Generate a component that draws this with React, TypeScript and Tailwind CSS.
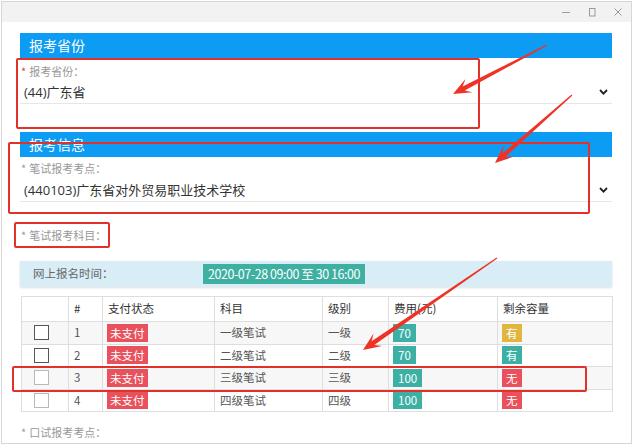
import React from "react";

type Pt = [number, number];

function arrowPoints(tail: Pt, tip: Pt): string {
  const [tx, ty] = tail;
  const [hx, hy] = tip;
  const dx = hx - tx;
  const dy = hy - ty;
  const L = Math.hypot(dx, dy);
  const ux = dx / L;
  const uy = dy / L;
  const px = -uy;
  const py = ux;
  const headLen = 17;
  const headW = 7.5;
  const neckW = 2.3;
  const tailW = 0.6;
  const neckX = hx - ux * (headLen - 5);
  const neckY = hy - uy * (headLen - 5);
  const barbX = hx - ux * (headLen + 1);
  const barbY = hy - uy * (headLen + 1);
  const pts: Pt[] = [
    [tx + px * tailW, ty + py * tailW],
    [neckX + px * neckW, neckY + py * neckW],
    [barbX + px * headW, barbY + py * headW],
    [hx, hy],
    [barbX - px * headW, barbY - py * headW],
    [neckX - px * neckW, neckY - py * neckW],
    [tx - px * tailW, ty - py * tailW],
  ];
  return pts.map(([x, y]) => `${x.toFixed(1)},${y.toFixed(1)}`).join(" ");
}

const arrows: [Pt, Pt][] = [
  [[547, 45], [453, 94]],
  [[572, 95], [495, 163]],
  [[497, 258], [363, 350]],
];

const CJK = { fontFamily: '"Noto Sans CJK SC", "Noto Sans", sans-serif' };
const VAL = { fontFamily: '"Open Sans", "Noto Sans CJK SC", sans-serif' };

function Chevron() {
  return (
    <svg width="9" height="6" viewBox="0 0 9 6" className="shrink-0">
      <path d="M1 1 L4.5 4.6 L8 1" fill="none" stroke="#222" strokeWidth="1.8" />
    </svg>
  );
}

function Label({ text, redStar }: { text: string; redStar?: boolean }) {
  return (
    <div className="flex items-center h-[14px] text-[11px] leading-[14px] text-[#999]">
      <span className={redStar ? "text-[#e8403a] ml-[1px]" : "text-[#999] ml-[1px]"}>*</span>
      <span className="ml-[3px]">{text}</span>
    </div>
  );
}

function SelectRow({ value }: { value: string }) {
  return (
    <div className="flex items-center justify-between h-[23px] border-b border-[#e6e6e6] pl-[4px] pr-[4px]">
      <span className="text-[13px] leading-[22px] text-[#333]" style={VAL}>
        {value}
      </span>
      <Chevron />
    </div>
  );
}

function Header({ text }: { text: string }) {
  return (
    <div className="h-[25px] bg-[#0d9cf3] pl-[9px] text-[14px] leading-[25px] text-white">
      {text}
    </div>
  );
}

type Row = {
  n: number;
  subject: string;
  level: string;
  fee: string;
  cap: string;
  capColor: string;
  dark: boolean;
  stripe: boolean;
};

const rows: Row[] = [
  { n: 1, subject: "一级笔试", level: "一级", fee: "70", cap: "有", capColor: "bg-[#e0b640]", dark: true, stripe: true },
  { n: 2, subject: "二级笔试", level: "二级", fee: "70", cap: "有", capColor: "bg-[#3cb0a5]", dark: true, stripe: false },
  { n: 3, subject: "三级笔试", level: "三级", fee: "100", cap: "无", capColor: "bg-[#e9525d]", dark: false, stripe: true },
  { n: 4, subject: "四级笔试", level: "四级", fee: "100", cap: "无", capColor: "bg-[#e9525d]", dark: false, stripe: false },
];

const cell = "border border-[#dedede] px-[5px] align-middle";

export default function App() {
  return (
    <div className="relative w-[634px] h-[446px] bg-white overflow-hidden" style={CJK}>
      <div className="ml-[1px] mt-[1px] w-[631px] h-[443px] border border-[#d6d6d6] flex flex-col bg-white">
        {/* title bar */}
        <div className="h-[20px] bg-[#f2f2f2] flex justify-end items-center shrink-0">
          <div className="w-[26px] flex justify-center">
            <svg width="8" height="8" viewBox="0 0 8 8">
              <path d="M0 4.5 H8" stroke="#9a9a9a" strokeWidth="1" />
            </svg>
          </div>
          <div className="w-[26px] flex justify-center">
            <svg width="8" height="9" viewBox="0 0 8 9">
              <rect x="1.5" y="0.5" width="5.5" height="7.5" fill="none" stroke="#9a9a9a" strokeWidth="1" />
            </svg>
          </div>
          <div className="w-[26px] flex justify-center">
            <svg width="8" height="8" viewBox="0 0 8 8">
              <path d="M0.5 0.5 L7.5 7.5 M7.5 0.5 L0.5 7.5" stroke="#9a9a9a" strokeWidth="1" />
            </svg>
          </div>
        </div>

        {/* content */}
        <div className="pl-[18px] pr-[19px] flex flex-col">
          <div className="mt-[11px]">
            <Header text="报考省份" />
          </div>
          <div className="mt-[6px]">
            <Label text="报考省份：" redStar />
          </div>
          <div className="mt-[3px]">
            <SelectRow value="(44)广东省" />
          </div>

          <div className="mt-[28px]">
            <Header text="报考信息" />
          </div>
          <div className="mt-[4px]">
            <Label text="笔试报考考点：" />
          </div>
          <div className="mt-[4px]">
            <SelectRow value="(440103)广东省对外贸易职业技术学校" />
          </div>

          <div className="mt-[26px]">
            <Label text="笔试报考科目：" />
          </div>

          <div className="mt-[19px] h-[26px] bg-[#d9edf7] flex items-center shadow-[0_1px_2px_rgba(0,0,0,0.12)]">
            <span className="pl-[13px] w-[183px] text-[11.5px] text-[#666]">网上报名时间：</span>
            <span className="h-[20px] px-[5px] bg-[#3eb0a2] text-white text-[12.5px] leading-[20px] tracking-[-0.45px]">
              2020-07-28 09:00 至 30 16:00
            </span>
          </div>

          <table className="mt-[9px] ml-[1px] border-collapse table-fixed w-[591px] text-[11.5px]">
            <colgroup>
              <col className="w-[47px]" />
              <col className="w-[34px]" />
              <col className="w-[112px]" />
              <col className="w-[108px]" />
              <col className="w-[66px]" />
              <col className="w-[109px]" />
              <col className="w-[115px]" />
            </colgroup>
            <thead>
              <tr className="h-[25px] text-[#333] text-left">
                <th className={cell + " font-normal"}></th>
                <th className={cell + " font-normal"}>#</th>
                <th className={cell + " font-normal"}>支付状态</th>
                <th className={cell + " font-normal"}>科目</th>
                <th className={cell + " font-normal"}>级别</th>
                <th className={cell + " font-normal"}>费用(元)</th>
                <th className={cell + " font-normal"}>剩余容量</th>
              </tr>
            </thead>
            <tbody>
              {rows.map((r) => (
                <tr
                  key={r.n}
                  className={(r.stripe ? "bg-[#f7f7f7] " : "bg-white ") + "h-[22.5px] text-[#555]"}
                >
                  <td className="border border-[#dedede] pl-[12px] align-middle">
                    <div
                      className={
                        r.dark
                          ? "w-[15px] h-[15px] border-[1.5px] border-[#555] bg-white"
                          : "w-[15px] h-[15px] border-[1.5px] border-[#b8b8b8] bg-white"
                      }
                    />
                  </td>
                  <td className={cell}>{r.n}</td>
                  <td className={cell + " !px-[4px]"}>
                    <span className="inline-block h-[18px] leading-[18px] px-[3px] bg-[#e9525d] text-white">
                      未支付
                    </span>
                  </td>
                  <td className={cell}>{r.subject}</td>
                  <td className={cell}>{r.level}</td>
                  <td className={cell + " !px-[4px]"}>
                    <span className="inline-block h-[18px] leading-[18px] px-[5px] bg-[#3cb0a5] text-white">
                      {r.fee}
                    </span>
                  </td>
                  <td className={cell + " !px-[4px]"}>
                    <span className={"inline-block h-[18px] leading-[18px] px-[4px] text-white " + r.capColor}>
                      {r.cap}
                    </span>
                  </td>
                </tr>
              ))}
            </tbody>
          </table>

          <div className="mt-[13px]">
            <Label text="口试报考考点：" />
          </div>
        </div>
      </div>

      {/* annotation overlays */}
      <div className="absolute left-[16px] top-[58px] w-[464px] h-[71px] border-2 border-[#e2302b] rounded-[2px]" />
      <div className="absolute left-[8px] top-[142px] w-[582px] h-[72px] border-2 border-[#e2302b] rounded-[2px]" />
      <div className="absolute left-[14px] top-[222px] w-[96px] h-[26px] border-2 border-[#e2302b] rounded-[2px]" />
      <div className="absolute left-[12px] top-[366px] w-[575px] h-[26px] border-2 border-[#e2302b] rounded-[2px]" />

      <svg className="absolute left-0 top-0 pointer-events-none" width="634" height="446" viewBox="0 0 634 446">
        {arrows.map(([t, h], i) => (
          <polygon key={i} points={arrowPoints(t, h)} fill="#ee3326" />
        ))}
      </svg>
    </div>
  );
}
